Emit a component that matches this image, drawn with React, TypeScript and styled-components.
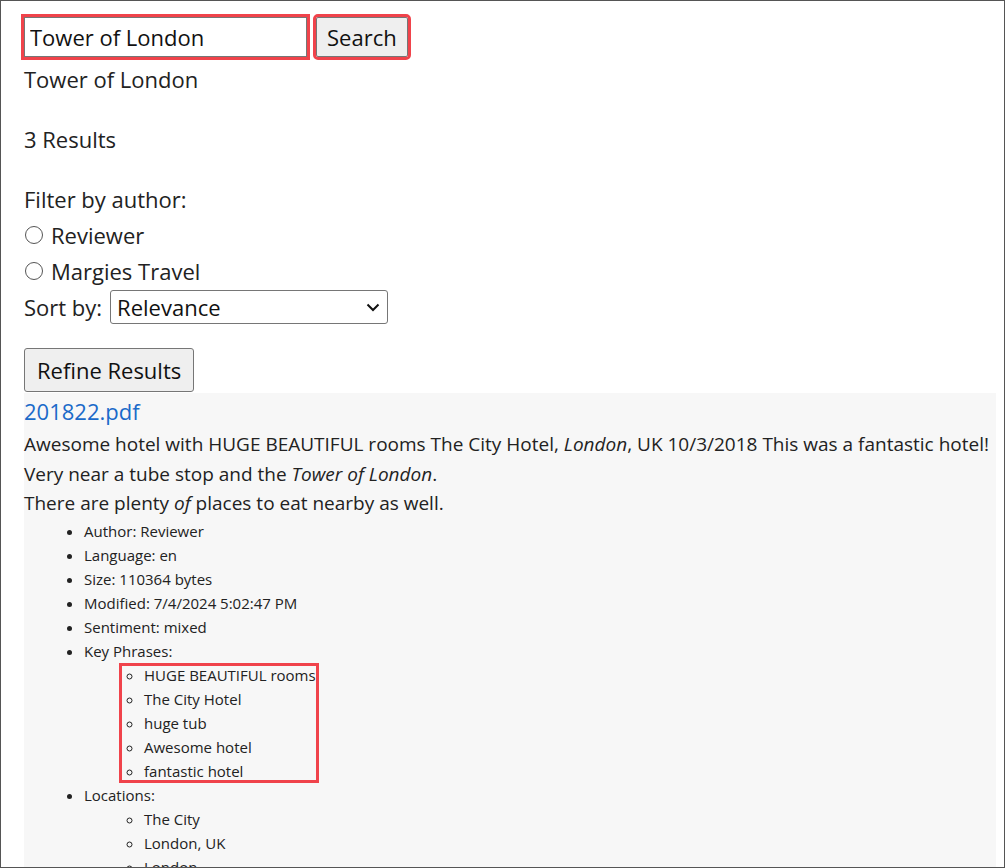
import React from 'react';
import styled, { createGlobalStyle } from 'styled-components';

const GlobalStyle = createGlobalStyle`
  html, body {
    margin: 0;
    padding: 0;
    background: #ffffff;
  }
  body {
    font-family: "Open Sans", "Noto Sans", sans-serif;
    color: #222222;
  }
`;

const authors = ['Reviewer', 'Margies Travel'];

const meta = [
  'Author: Reviewer',
  'Language: en',
  'Size: 110364 bytes',
  'Modified: 7/4/2024 5:02:47 PM',
  'Sentiment: mixed',
];

const keyPhrases = ['HUGE BEAUTIFUL rooms', 'The City Hotel', 'huge tub', 'Awesome hotel', 'fantastic hotel'];

const locations = ['The City', 'London, UK', 'London'];

const App: React.FC = () => {
  return (
    <>
      <GlobalStyle />
      <Frame>
        <SearchBar>
          <SearchInput defaultValue="Tower of London" />
          <Button $annotated>Search</Button>
        </SearchBar>
        <Query>Tower of London</Query>
        <Count>3 Results</Count>
        <FilterLabel>Filter by author:</FilterLabel>
        {authors.map((a) => (
          <RadioRow key={a}>
            <Radio type="radio" name="author" />
            {a}
          </RadioRow>
        ))}
        <SortRow>
          Sort by:
          <SelectWrap>
            <Select defaultValue="relevance">
              <option value="relevance">Relevance</option>
            </Select>
            <Chevron width="14" height="9" viewBox="0 0 14 9">
              <polyline points="1.5,1.5 7,7 12.5,1.5" fill="none" stroke="#111" strokeWidth="2" />
            </Chevron>
          </SelectWrap>
        </SortRow>
        <RefineButton>Refine Results</RefineButton>
        <ResultCard>
          <DocLink href="#">201822.pdf</DocLink>
          <SnippetBlock>
            <Snippet>
              Awesome hotel with HUGE BEAUTIFUL rooms The City Hotel, <em>London</em>, UK 10/3/2018 This was a fantastic hotel!
            </Snippet>
            <Snippet>
              Very near a tube stop and the <em>Tower of London</em>.
            </Snippet>
            <Snippet>
              There are plenty <em>of</em> places to eat nearby as well.
            </Snippet>
          </SnippetBlock>
          <MetaList>
            {meta.map((m) => (
              <li key={m}>{m}</li>
            ))}
            <li>
              Key Phrases:
              <SubList $annotated>
                {keyPhrases.map((k) => (
                  <li key={k}>{k}</li>
                ))}
              </SubList>
            </li>
            <li>
              Locations:
              <SubList>
                {locations.map((l) => (
                  <li key={l}>{l}</li>
                ))}
              </SubList>
            </li>
          </MetaList>
        </ResultCard>
      </Frame>
    </>
  );
};

export default App;

const Frame = styled.div`
  box-sizing: border-box;
  height: 868px;
  border: 1px solid #555555;
  padding: 16px 8px 0 23px;
  overflow: hidden;
  font-size: 22px;
`;

const SearchBar = styled.div`
  display: flex;
  align-items: center;
  gap: 9px;
`;

const SearchInput = styled.input`
  box-sizing: border-box;
  width: 283px;
  height: 40px;
  padding: 0 5px;
  border: 1px solid #767676;
  font-family: inherit;
  font-size: 22px;
  color: #111;
  outline: 3px solid #f0434b;
`;

const Button = styled.button<{ $annotated?: boolean }>`
  box-sizing: border-box;
  height: 40px;
  padding: 0 10px;
  background: #efefef;
  border: 1px solid #767676;
  border-radius: 2px;
  font-family: inherit;
  font-size: 22px;
  color: #111;
  outline: ${({ $annotated }) => ($annotated ? '3px solid #f0434b' : 'none')};
`;

const Query = styled.div`
  margin-top: 7px;
  line-height: 30px;
`;

const Count = styled.div`
  margin-top: 30px;
  line-height: 30px;
`;

const FilterLabel = styled.div`
  margin-top: 27px;
  line-height: 36px;
`;

const RadioRow = styled.label`
  display: flex;
  align-items: center;
  gap: 8px;
  line-height: 36px;
`;

const Radio = styled.input`
  appearance: none;
  box-sizing: border-box;
  width: 18px;
  height: 18px;
  margin: 0 0 0 1px;
  border: 1px solid #555;
  border-radius: 50%;
  background: #fff;
`;

const SortRow = styled.div`
  display: flex;
  align-items: center;
  gap: 8px;
  line-height: 36px;
`;

const SelectWrap = styled.div`
  position: relative;
  display: flex;
`;

const Select = styled.select`
  appearance: none;
  box-sizing: border-box;
  width: 278px;
  height: 34px;
  padding: 0 6px;
  border: 1px solid #767676;
  border-radius: 3px;
  background: #fff;
  font-family: inherit;
  font-size: 22px;
  color: #111;
`;

const Chevron = styled.svg`
  position: absolute;
  right: 8px;
  top: 13px;
  pointer-events: none;
`;

const RefineButton = styled(Button)`
  margin-top: 23px;
  height: 44px;
  padding: 0 12px;
  border-radius: 3px;
`;

const ResultCard = styled.div`
  margin-top: 1px;
  background: #f7f7f7;
  padding-top: 1px;
  min-height: 600px;
`;

const DocLink = styled.a`
  display: block;
  line-height: 34px;
  color: #1b6ac9;
  text-decoration: none;
`;

const SnippetBlock = styled.div`
  margin-top: 2px;
`;

const Snippet = styled.div`
  font-size: 19px;
  line-height: 29.5px;
`;

const MetaList = styled.ul`
  margin: 0;
  padding-left: 60px;
  font-size: 15px;
  line-height: 24px;
`;

const SubList = styled.ul<{ $annotated?: boolean }>`
  margin: 0;
  list-style-type: circle;
  padding-left: ${({ $annotated }) => ($annotated ? '25px' : '60px')};
  margin-left: ${({ $annotated }) => ($annotated ? '35px' : '0')};
  width: ${({ $annotated }) => ($annotated ? 'fit-content' : 'auto')};
  padding-right: ${({ $annotated }) => ($annotated ? '3px' : '0')};
  outline: ${({ $annotated }) => ($annotated ? '3px solid #f0434b' : 'none')};
  outline-offset: -3px;
`;
